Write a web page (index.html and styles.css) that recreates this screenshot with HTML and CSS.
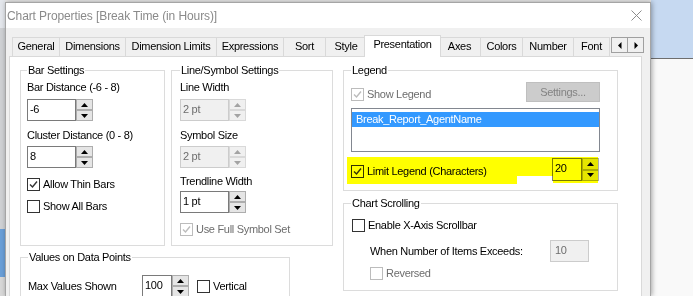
FILE: index.html
```html
<!DOCTYPE html>
<html lang="en">
<head>
  <meta charset="UTF-8" />
  <title>Chart Properties</title>
  <link rel="stylesheet" href="styles.css">
</head>
<body>

  <div class="screen">

    <div class="side-left"></div>

    <div class="dialog">

      <!-- Title bar -->
      <div class="titlebar">
        <span class="title">Chart Properties [Break Time (in Hours)]</span>
        <svg class="close" width="11" height="11" viewBox="0 0 11 11">
          <path d="M0.5 0.5 L10.5 10.5 M10.5 0.5 L0.5 10.5" stroke="#8c8c8c" stroke-width="1" fill="none" />
        </svg>
      </div>

      <div class="body">

        <!-- Tabs -->
        <div class="tabs">
          <span class="tab">General</span>
          <span class="tab">Dimensions</span>
          <span class="tab">Dimension Limits</span>
          <span class="tab">Expressions</span>
          <span class="tab">Sort</span>
          <span class="tab">Style</span>
          <span class="tab active">Presentation</span>
          <span class="tab">Axes</span>
          <span class="tab">Colors</span>
          <span class="tab">Number</span>
          <span class="tab">Font</span>
          <div class="tab-scroll">
            <span class="arrow-btn">
              <svg width="4" height="7" viewBox="0 0 4 7"><polygon points="3.5,0 3.5,7 0,3.5" fill="#000" /></svg>
            </span>
            <span class="arrow-btn">
              <svg width="4" height="7" viewBox="0 0 4 7"><polygon points="0.5,0 0.5,7 4,3.5" fill="#000" /></svg>
            </span>
          </div>
        </div>

        <!-- Presentation page -->
        <div class="page">

          <div class="col-left">
            <div class="row-top">

              <fieldset class="group group-bar">
                <legend>Bar Settings</legend>
                <div class="field-label mt4">Bar Distance (-6 - 8)</div>
                <div class="spin mt5">
                  <span class="spin-text">-6</span>
                  <span class="spin-btns">
                    <span class="spin-btn"><svg width="7" height="4" viewBox="0 0 7 4"><polygon points="0,4 3.5,0 7,4" /></svg></span>
                    <span class="spin-btn"><svg width="7" height="4" viewBox="0 0 7 4"><polygon points="0,0 7,0 3.5,4" /></svg></span>
                  </span>
                </div>
                <div class="field-label mt8">Cluster Distance (0 - 8)</div>
                <div class="spin mt4">
                  <span class="spin-text">8</span>
                  <span class="spin-btns">
                    <span class="spin-btn"><svg width="7" height="4" viewBox="0 0 7 4"><polygon points="0,4 3.5,0 7,4" /></svg></span>
                    <span class="spin-btn"><svg width="7" height="4" viewBox="0 0 7 4"><polygon points="0,0 7,0 3.5,4" /></svg></span>
                  </span>
                </div>
                <div class="check mt10">
                  <span class="box"><svg width="11" height="11" viewBox="0 0 11 11"><polyline points="2,5.5 4.5,8 9,2.5" /></svg></span>
                  Allow Thin Bars
                </div>
                <div class="check mt9">
                  <span class="box"></span>
                  Show All Bars
                </div>
              </fieldset>

              <fieldset class="group group-line">
                <legend>Line/Symbol Settings</legend>
                <div class="field-label mt4">Line Width</div>
                <div class="spin disabled mt5">
                  <span class="spin-text">2 pt</span>
                  <span class="spin-btns">
                    <span class="spin-btn"><svg width="7" height="4" viewBox="0 0 7 4"><polygon points="0,4 3.5,0 7,4" /></svg></span>
                    <span class="spin-btn"><svg width="7" height="4" viewBox="0 0 7 4"><polygon points="0,0 7,0 3.5,4" /></svg></span>
                  </span>
                </div>
                <div class="field-label mt8">Symbol Size</div>
                <div class="spin disabled mt4">
                  <span class="spin-text">2 pt</span>
                  <span class="spin-btns">
                    <span class="spin-btn"><svg width="7" height="4" viewBox="0 0 7 4"><polygon points="0,4 3.5,0 7,4" /></svg></span>
                    <span class="spin-btn"><svg width="7" height="4" viewBox="0 0 7 4"><polygon points="0,0 7,0 3.5,4" /></svg></span>
                  </span>
                </div>
                <div class="field-label mt7">Trendline Width</div>
                <div class="spin mt3">
                  <span class="spin-text">1 pt</span>
                  <span class="spin-btns">
                    <span class="spin-btn"><svg width="7" height="4" viewBox="0 0 7 4"><polygon points="0,4 3.5,0 7,4" /></svg></span>
                    <span class="spin-btn"><svg width="7" height="4" viewBox="0 0 7 4"><polygon points="0,0 7,0 3.5,4" /></svg></span>
                  </span>
                </div>
                <div class="check disabled mt10">
                  <span class="box"><svg width="11" height="11" viewBox="0 0 11 11"><polyline points="2,5.5 4.5,8 9,2.5" /></svg></span>
                  Use Full Symbol Set
                </div>
              </fieldset>

            </div>

            <fieldset class="group group-values">
              <legend>Values on Data Points</legend>
              <div class="values-row">
                <span class="values-label">Max Values Shown</span>
                <div class="spin spin-narrow">
                  <span class="spin-text">100</span>
                  <span class="spin-btns">
                    <span class="spin-btn"><svg width="7" height="4" viewBox="0 0 7 4"><polygon points="0,4 3.5,0 7,4" /></svg></span>
                    <span class="spin-btn"><svg width="7" height="4" viewBox="0 0 7 4"><polygon points="0,0 7,0 3.5,4" /></svg></span>
                  </span>
                </div>
                <div class="check vertical-check">
                  <span class="box"></span>
                  Vertical
                </div>
              </div>
            </fieldset>
          </div>

          <div class="col-right">

            <fieldset class="group group-legend">
              <legend>Legend</legend>
              <div class="legend-top">
                <div class="check disabled">
                  <span class="box"><svg width="11" height="11" viewBox="0 0 11 11"><polyline points="2,5.5 4.5,8 9,2.5" /></svg></span>
                  Show Legend
                </div>
                <span class="btn">Settings...</span>
              </div>
              <div class="list">
                <div class="list-item">Break_Report_AgentName</div>
              </div>
              <div class="limit-row">
                <div class="check">
                  <span class="box"><svg width="11" height="11" viewBox="0 0 11 11"><polyline points="2,5.5 4.5,8 9,2.5" /></svg></span>
                  Limit Legend (Characters)
                </div>
                <div class="spin spin-narrow">
                  <span class="spin-text">20</span>
                  <span class="spin-btns">
                    <span class="spin-btn"><svg width="7" height="4" viewBox="0 0 7 4"><polygon points="0,4 3.5,0 7,4" /></svg></span>
                    <span class="spin-btn"><svg width="7" height="4" viewBox="0 0 7 4"><polygon points="0,0 7,0 3.5,4" /></svg></span>
                  </span>
                </div>
              </div>
            </fieldset>

            <fieldset class="group group-scroll">
              <legend>Chart Scrolling</legend>
              <div class="check scroll-check">
                <span class="box"></span>
                Enable X-Axis Scrollbar
              </div>
              <div class="exceed-row">
                <span class="exceed-label">When Number of Items Exceeds:</span>
                <span class="textbox">10</span>
              </div>
              <div class="check disabled reversed">
                <span class="box"></span>
                Reversed
              </div>
            </fieldset>

          </div>
        </div>
      </div>
    </div>

    <div class="side-right"></div>

    <!-- Yellow highlighter stroke -->
    <div class="marker"></div>

  </div>

</body>
</html>
```

FILE: styles.css
```css
* { box-sizing: border-box; }
html, body { height: 100%; margin: 0; overflow: hidden; }
body {
  font-family: "Liberation Sans", Arial, sans-serif;
  font-size: 11px;
  letter-spacing: -0.3px;
  color: #000;
  background: #e9e9e9;
}

.screen {
  display: flex;
  width: 693px;
  height: 296px;
  overflow: hidden;
  position: relative;
}

.side-left {
  width: 5px;
  flex: none;
  background: linear-gradient(to bottom,
    #e4e7ec 0, #e4e7ec 28px,
    #cfd1d4 28px, #cfd1d4 229px,
    #6a9fd8 229px, #6a9fd8 277px,
    #d8d8d8 277px);
}

.side-right {
  flex: 1;
  background: linear-gradient(to bottom,
    #c6d9f1 0, #c6d9f1 58px,
    #6e6e6e 58px, #6e6e6e 59px,
    #f9f9f9 59px);
}

.dialog {
  width: 646px;
  flex: none;
  margin-top: 2px;
  border: 1px solid #a5a5a5;
  border-bottom: none;
  background: #f0f0f0;
  box-shadow: 1px 0 5px rgba(0,0,0,0.35);
  position: relative;
  z-index: 1;
}

/* title bar */
.titlebar {
  height: 25px;
  background: #fff;
  display: flex;
  align-items: center;
  padding-left: 1px;
}
.title {
  flex: 1;
  font-size: 12px;
  letter-spacing: -0.1px;
  color: #8a8a8a;
}
.close { margin-right: 8px; }

.body { padding: 9px 8px 0 3px; }

/* tabs */
.tabs {
  display: flex;
  align-items: flex-end;
  height: 19px;
  padding-left: 3px;
}
.tab {
  flex: none;
  height: 19px;
  border: 1px solid #d9d9d9;
  border-bottom: none;
  background: #f0f0f0;
  margin-right: -1px;
  text-align: center;
  line-height: 17px;
  white-space: nowrap;
}
.tab:nth-child(1) { width: 48px; }
.tab:nth-child(2) { width: 67px; }
.tab:nth-child(3) { width: 92px; }
.tab:nth-child(4) { width: 68px; }
.tab:nth-child(5) { width: 43px; }
.tab:nth-child(6) { width: 42px; }
.tab:nth-child(7) { width: 77px; }
.tab:nth-child(8) { width: 43px; }
.tab:nth-child(9) { width: 43px; }
.tab:nth-child(10) { width: 52px; }
.tab:nth-child(11) { width: 37px; }

.tab.active {
  height: 22px;
  margin: 0 -3px -1px -2px;
  padding-bottom: 3px;
  background: #fff;
  position: relative;
  z-index: 2;
}

.tab-scroll {
  display: flex;
  align-self: flex-start;
  margin-left: auto;
  margin-right: -2px;
  position: relative;
  z-index: 3;
}
.arrow-btn {
  width: 17px;
  height: 16px;
  border: 1px solid #a0a0a0;
  background: #f0f0f0;
  display: flex;
  align-items: center;
  justify-content: center;
}
.arrow-btn + .arrow-btn { margin-left: -1px; }

/* page */
.page {
  height: 250px;
  border: 1px solid #d9d9d9;
  background: #fff;
  padding: 7px 0 0 10px;
  display: flex;
  gap: 10px;
}

.col-left { width: 313px; flex: none; }
.row-top { display: flex; gap: 6px; }

.group {
  margin: 0;
  min-width: 0;
  border: 1px solid #dcdcdc;
  padding: 0 0 0 6px;
}
.group legend {
  padding: 0 1px;
  line-height: 13px;
}

.group-bar { width: 145px; height: 182px; }
.group-line { width: 162px; height: 182px; padding-left: 8px; }
.group-values { width: 270px; height: 60px; margin-top: 5px; padding-left: 7px; }
.group-legend { width: 275px; height: 127px; padding: 0 17px 0 7px; }
.group-scroll { width: 275px; height: 94px; margin-top: 6px; padding-left: 7px; }

.mt3 { margin-top: 3px; }
.mt4 { margin-top: 4px; }
.mt5 { margin-top: 5px; }
.mt7 { margin-top: 7px; }
.mt8 { margin-top: 8px; }
.mt9 { margin-top: 9px; }
.mt10 { margin-top: 10px; }

.field-label { line-height: 13px; }

/* spinner */
.spin { display: flex; height: 22px; }
.spin-text {
  width: 49px;
  border: 1px solid #7a7a7a;
  background: #fff;
  padding: 1px 2px;
  line-height: 16px;
}
.spin-narrow .spin-text { width: 30px; }
.spin-btns {
  width: 17px;
  display: flex;
  flex-direction: column;
}
.spin-btn {
  flex: 1;
  border: 1px solid #adadad;
  background: #e5e5e5;
  display: flex;
  align-items: center;
  justify-content: center;
}
.spin-btn svg { fill: #000; }

.spin.disabled .spin-text {
  background: #f0f0f0;
  border-color: #cccccc;
  color: #6d6d6d;
}
.spin.disabled .spin-btn {
  border-color: #d9d9d9;
  background: #f0f0f0;
}
.spin.disabled .spin-btn svg { fill: #a3a3a3; }

/* checkbox */
.check {
  display: flex;
  align-items: center;
  gap: 3px;
  line-height: 13px;
  white-space: nowrap;
}
.box {
  width: 13px;
  height: 13px;
  flex: none;
  border: 1px solid #333;
  background: #fff;
}
.box svg { display: block; }
.box polyline {
  fill: none;
  stroke: #333;
  stroke-width: 1.4;
}
.check.disabled { color: #6d6d6d; }
.check.disabled .box { border-color: #bcbcbc; }
.check.disabled .box polyline { stroke: #bcbcbc; }

/* values on data points */
.values-row {
  display: flex;
  align-items: center;
  margin-top: 11px;
}
.values-label { width: 114px; flex: none; }
.vertical-check { margin-left: 8px; }

/* legend */
.legend-top {
  display: flex;
  justify-content: space-between;
  align-items: flex-start;
  margin-top: 5px;
}
.legend-top .check { margin-top: 6px; }
.btn {
  width: 74px;
  height: 20px;
  border: 1px solid #bfbfbf;
  background: #cccccc;
  color: #838383;
  text-align: center;
  line-height: 18px;
}

.list {
  margin-top: 6px;
  height: 44px;
  border: 1px solid #828790;
  padding-top: 3px;
}
.list-item {
  height: 15px;
  line-height: 15px;
  background: #3399ff;
  color: #fff;
  padding-left: 4px;
}

.limit-row {
  display: flex;
  align-items: flex-start;
  margin-top: 6px;
}
.limit-row .check { margin-top: 7px; }
.limit-row .spin { margin-left: auto; margin-right: 1px; height: 23px; }

/* chart scrolling */
.scroll-check { margin-top: 9px; margin-left: 1px; }
.exceed-row {
  display: flex;
  align-items: center;
  margin-top: 8px;
  padding-left: 19px;
}
.exceed-label { flex: 1; }
.textbox {
  width: 39px;
  height: 22px;
  margin-right: 28px;
  border: 1px solid #cccccc;
  background: #f0f0f0;
  color: #6d6d6d;
  padding: 1px 4px;
  line-height: 16px;
}
.reversed { margin-top: 5px; padding-left: 19px; }

/* yellow highlighter over the limit legend row */
.marker {
  position: absolute;
  left: 347px;
  top: 157px;
  width: 251px;
  height: 27px;
  background: #ffff00;
  mix-blend-mode: multiply;
  clip-path: polygon(0 0, 100% 0, 100% 26px, 206px 26px, 206px 19px, 170px 19px, 170px 100%, 0 100%);
  pointer-events: none;
  z-index: 5;
}
```
